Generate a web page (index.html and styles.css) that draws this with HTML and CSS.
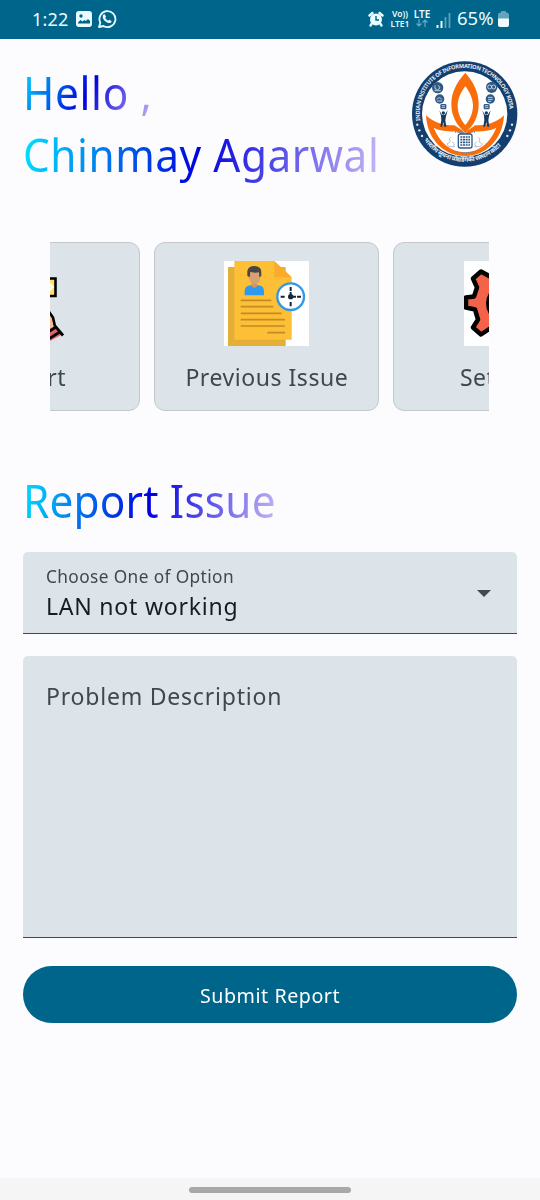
FILE: index.html
```
<!DOCTYPE html>
<html lang="en">
<head>
<meta charset="utf-8">
<title>Report Issue</title>
<link rel="stylesheet" href="styles.css">
</head>
<body>
<div class="screen">
  <header class="status">
    <span class="clock">1:22</span>
    <svg class="s-image" viewBox="0 0 16 16" width="16" height="16"><rect width="16" height="16" rx="3" fill="#e9fbff"/><circle cx="5" cy="5" r="1.7" fill="#00658b"/><path d="M2 12.500V11.500l2.500-2.500 2 1.500 2-1.500 1.500 1 2-2 2 2v2.500z" fill="#00658b"/></svg>
    <svg class="s-whatsapp" viewBox="0 0 20 20" width="20" height="20"><path d="M2 18l1.300-4.300A8 8 0 1 1 6.400 17z" fill="none" stroke="#e9fbff" stroke-width="1.800" stroke-linejoin="round"/><path d="M6.500 5.500l1.300-.2 1.200 2.500-.8 1.200q1 1.800 2.900 2.700l1.100-1 2.300 1.200c.2 1.500-1.300 2.400-2.800 2.100C8.600 13.300 6 10.500 5.700 8c0-1 .2-1.900.8-2.500z" fill="#e9fbff"/></svg>
    <span class="spacer"></span>
    <svg class="s-alarm" viewBox="0 0 16 16" width="16" height="16"><circle cx="8" cy="8.500" r="6" fill="#e9fbff"/><path d="M1.500 4.500L4.500 2M14.500 4.500L11.500 2M3.500 13L2.500 14.500M12.500 13l1 1.500" stroke="#e9fbff" stroke-width="2.400" stroke-linecap="round"/><path d="M8 5v4h3" fill="none" stroke="#00658b" stroke-width="1.400"/></svg>
    <span class="net volte"><span>Vo))</span><span>LTE1</span></span>
    <span class="net lte"><span>LTE</span><svg viewBox="0 0 12 8" width="12" height="8"><path d="M3 0v7M.5 4.500L3 7l2.500-2.500M9 8V1M6.500 3.500L9 1l2.500 2.500" fill="none" stroke="#65a9c1" stroke-width="1.200"/></svg></span>
    <svg class="s-signal" viewBox="0 0 15 15" width="15" height="15"><path d="M1.500 15v-3M5.500 15V8" stroke="#e9fbff" stroke-width="2"/><path d="M9.500 15V4M13.500 15V0" stroke="#5fa0b9" stroke-width="1.800"/></svg>
    <span class="percent">65%</span>
    <svg class="s-battery" viewBox="0 0 11 16" width="11" height="16"><rect x="3" width="5" height="3" rx="1" fill="#65a3bb"/><rect y="1.500" width="11" height="14.500" rx="2.500" fill="#65a3bb"/><path d="M0 7.500h11v6a2.500 2.500 0 0 1-2.500 2.500h-6A2.500 2.500 0 0 1 0 13.500z" fill="#eefcff"/></svg>
  </header>

  <section class="greeting">
    <div class="names">
      <h1 class="title hello">Hello ,</h1>
      <h1 class="title person">Chinmay Agarwal</h1>
    </div>
    <svg class="logo" viewBox="0 0 360 360" width="120" height="120">
      <defs>
        <path id="arcTop" d="M46 197A135 135 0 1 1 312 197"/>
        <path id="arcBottom" d="M49 241A146 146 0 0 0 309 241"/>
      </defs>
      <circle cx="179" cy="177" r="158" fill="#123f70"/>
      <circle cx="179" cy="177" r="128" fill="#fff"/>
      <text class="ring"><textPath href="#arcTop" textLength="436">INDIAN INSTITUTE OF INFORMATION TECHNOLOGY KOTA</textPath></text>
      <text class="ring hindi"><textPath href="#arcBottom" startOffset="14" textLength="268">भारतीय सूचना प्रौद्योगिकी संस्थान कोटा</textPath></text>
      <g fill="#e8eef5"><circle cx="37" cy="209" r="3.500"/><circle cx="43" cy="226" r="3.500"/><circle cx="51" cy="243" r="3.500"/><circle cx="321" cy="209" r="3.500"/><circle cx="315" cy="226" r="3.500"/><circle cx="307" cy="243" r="3.500"/></g>
      <path d="M63 181C86 203 118 212 148 211L172 226 180 237 189 226 211 211C242 212 275 203 297 181 294 252 244 303 180 303S66 252 63 181z" fill="#f96e0b"/>
      <path d="M86 218C106 230 136 228 157 230L180 247 203 230C224 228 254 230 274 218 256 262 224 291 180 292 136 291 104 262 86 218z" fill="#fff"/>
      <path fill-rule="evenodd" d="M181 53C155 82 139 112 139 146 139 185 155 210 181 233 207 210 221 185 221 146 221 112 206 82 181 53zM181 94C195 113 204 132 204 151 204 174 195 194 181 211 167 194 158 174 158 151 158 132 167 113 181 94z" fill="#f96e0b"/>
      <g fill="#315985"><circle cx="98" cy="98" r="17"/><circle cx="104" cy="132" r="14"/><rect x="106" y="147" width="18" height="16" rx="4"/><circle cx="260" cy="97" r="17"/><circle cx="256" cy="132" r="14"/><rect x="236" y="147" width="18" height="16" rx="4"/></g>
      <g fill="none" stroke="#d5e1ed" stroke-width="2.500"><path d="M90 91v10q8 8 15-2l-5-8M88 107h19M95 134q8-12 16 0M96 138h15"/><circle cx="254" cy="96" r="6"/><circle cx="266" cy="96" r="6"/><path d="M249 127h14M249 133h14M249 139h10M110 152h10M110 157h10M240 152h10M240 157h10"/></g>
      <g fill="#15395f"><circle cx="115" cy="174" r="5"/><path d="M103 166l8 14h8l9-14-5 18-2 12 3 19h-6l-3-14-4 14h-5l3-20-1-13z"/><circle cx="244" cy="174" r="5"/><path d="M232 166l8 14h8l9-14-5 18-2 12 3 19h-6l-3-14-4 14h-5l3-20-1-13z"/></g>
      <rect x="160" y="237" width="41" height="42" rx="6" fill="#fff" stroke="#315985" stroke-width="4"/>
      <path d="M166 246h29M166 254h29M166 262h29M166 270h29" stroke="#315985" stroke-width="5" stroke-dasharray="6 2"/>
      <path d="M150 231h61M148 289q32 10 65 0" fill="none" stroke="#6e88a3" stroke-width="4" stroke-dasharray="4 3"/>
      <g fill="none" stroke="#a7b5c5" stroke-width="2.500"><path d="M138 246q-10 5-2 14l-10 7 6 8h18M141 260l8 7-6 8M219 246q10 5 3 14l10 7-6 8h-18M216 260l-8 7 6 8"/></g>
    </svg>
  </section>

  <section class="carousel">
    <div class="card">
      <svg class="pic" viewBox="0 0 84 84" width="84" height="84">
        <path d="M50 17H69.500V34.500H50" fill="#ffdf72" stroke="#000" stroke-width="2.600"/><path d="M64.500 22q0 3.500 3.500 3.500-3.500 0-3.500 3.500" stroke="#fff" fill="none" stroke-width="2"/>
        <path d="M56 40L64 52 69 60 70 66 56 76z" fill="#f8bc94"/><path d="M62 49L67 56 69 65" fill="none" stroke="#000" stroke-width="2.600"/>
        <path d="M56 73L71 65 76 73 56 84z" fill="#e95d72"/><path d="M58 73L70 65.500 77 74M60 79L73 71" fill="none" stroke="#000" stroke-width="2.800"/>
      </svg>
      <span class="label">Report</span>
    </div>
    <div class="card">
      <svg class="pic white" viewBox="0 0 255 255" width="85" height="85">
        <path d="M12 18H185V255H12z" fill="#e4af36"/>
        <path d="M31 0H151L203 49V236H31z" fill="#fdbf35"/><path d="M151 0L203 49H151z" fill="#fda92c"/>
        <path d="M62 103V91Q62 73 81 73H101Q120 73 120 91V103z" fill="#2d9af0"/>
        <path d="M83 62H99V76Q91 85 83 76z" fill="#cf9760"/><path d="M74 34H109V48Q107 69 92 70 77 67 74 48z" fill="#d9a073"/>
        <path d="M70 45V30Q73 15 91 15 112 17 112 32V45L106 49 105 34Q91 37 79 32L77 49z" fill="#474747"/>
        <path d="M52 118H140M52 137H146M52 157H171M52 176H181M52 195H181M132 215H181" stroke="#c18c26" stroke-width="5" stroke-linecap="round"/>
        <circle cx="200" cy="107" r="40" fill="#fff" stroke="#3197e8" stroke-width="7"/>
        <path d="M200 78V90M200 123V136M170 107H182M219 107H231M200 93V107H216" fill="none" stroke="#14263b" stroke-width="6"/><circle cx="200" cy="107" r="8" fill="#14263b"/>
      </svg>
      <span class="label">Previous Issue</span>
    </div>
    <div class="card">
      <svg class="pic white" viewBox="0 0 84 84" width="84" height="84">
        <path d="M2 36L10 35 13 26 9 17 17 10 26 15 32 12 34 3H50L52 12 58 15 67 10 75 17 70 26 73 35 82 36V47L73 49 70 58 75 67 67 73 58 68 52 71 50 81H34L32 71 26 67 17 73 9 66 14 58 11 48 2 46z" fill="#f26349" stroke="#000" stroke-width="4.500" stroke-linejoin="round"/><circle cx="42" cy="42" r="18" fill="#fff" stroke="#000" stroke-width="4"/>
      </svg>
      <span class="label">Settings</span>
    </div>
  </section>

  <h2 class="title report">Report Issue</h2>
  <div class="field select">
    <div class="select-text"><span class="hint">Choose One of Option</span><span class="value">LAN not working</span></div>
    <svg class="arrow" viewBox="0 0 14 7" width="14" height="7"><path d="M0 0H14L7 7z" fill="#414a51"/></svg>
  </div>
  <div class="field area"><span>Problem Description</span></div>
  <button class="submit"><span>Submit Report</span></button>
  <footer class="nav"><span class="handle"></span></footer>
</div>
</body>
</html>
```
FILE: styles.css
```
* { box-sizing: border-box; }
body { margin: 0; background: #fcfcff; font-family: "Noto Sans", sans-serif; color: #41484d; }
.screen { width: 540px; height: 1200px; display: flex; flex-direction: column; overflow: hidden; }
.status { height: 39px; flex: none; background: #00658b; color: #e9fbff; display: flex; align-items: center; padding: 0 31px 1px 32px; }
.clock { font-size: 18px; letter-spacing: .2px; width: 44px; }
.s-whatsapp { margin-left: 5px; }
.spacer { flex: 1; }
.net { display: flex; flex-direction: column; align-items: center; font-size: 10px; line-height: 9px; font-weight: 600; height: 18px; }
.volte { margin-left: 6px; width: 20px; height: 20px; font-size: 8.500px; line-height: 10px; }
.lte { margin-left: 3px; width: 18px; margin-top: 0; }
.s-signal { margin-left: 5px; margin-top: 2px; }
.percent { font-size: 18.500px; line-height: 22px; margin: -2px 0 0 6px; width: 41px; white-space: nowrap; }
.greeting { height: 203px; flex: none; display: flex; justify-content: space-between; padding: 16px 15px 0 23px; }
.names { padding-top: 6px; width: 370px; }
/* Text is condensed slightly to suit the narrow letterforms of the phone UI. */
.title { margin: 0; width: max-content; height: 62px; line-height: 62px; font-size: 46px; font-weight: 400; white-space: nowrap; color: transparent; background-clip: text; -webkit-background-clip: text; transform: scaleX(.92); transform-origin: left; }
.hello { background-image: linear-gradient(116deg, #00e5ff, #0000dd 50%, #c8b8f5); letter-spacing: .7px; }
.person { background-image: linear-gradient(100deg, #00e5ff, #0000dd 50%, #c8b8f5); letter-spacing: .6px; }
.report { background-image: linear-gradient(104deg, #00e5ff, #0000dd 50%, #c8b8f5); margin: 58px 0 0 23px; flex: none; letter-spacing: .2px; }
.logo { display: block; flex: none; }
.ring { font-size: 17px; font-weight: 700; fill: #e4ebf3; }
.hindi { font-size: 19px; }
.carousel { margin-left: 50px; width: 439px; padding-right: 5.500px; height: 169px; flex: none; display: flex; justify-content: center; gap: 14px; overflow: hidden; }
.card { width: 225px; height: 169px; flex: none; border: 1.500px solid #c3c8cb; border-radius: 11px; background: #dce3e9; display: flex; flex-direction: column; align-items: center; padding-top: 18px; }
.pic { display: block; height: 85px; }
.white { background: #fff; }
.label { margin-top: 14px; font-size: 24px; line-height: 34px; white-space: nowrap; letter-spacing: .55px; transform: scaleX(.96); }
.field { margin: 0 23px; flex: none; background: #dce3e9; border-radius: 5px 5px 0 0; border-bottom: 1.500px solid #41484d; }
.select { margin-top: 21px; height: 82px; display: flex; justify-content: space-between; align-items: center; padding: 0 26px 0 23px; }
.select-text { display: flex; flex-direction: column; transform: scaleX(.96); transform-origin: left; }
.hint { font-size: 18px; line-height: 26px; letter-spacing: .4px; }
.value { font-size: 24px; line-height: 34px; color: #191c1e; letter-spacing: .8px; }
.arrow { margin-top: 2px; }
.area { margin-top: 22px; height: 282px; padding: 23px; font-size: 24px; line-height: 34px; letter-spacing: .8px; }
.area span { display: inline-block; transform: scaleX(.96); transform-origin: left; }
.submit { margin: 28px 23px 0; height: 57px; flex: none; border: 0; border-radius: 29px; background: #00658b; color: #fff; font: 20.500px "Noto Sans", sans-serif; letter-spacing: .55px; }
.submit span { display: inline-block; transform: scaleX(.96); }
.nav { margin-top: auto; height: 22px; background: #f5f5f5; display: flex; justify-content: center; padding-top: 9px; }
.handle { width: 162px; height: 6px; border-radius: 3px; background: #a8a8a8; }
```
